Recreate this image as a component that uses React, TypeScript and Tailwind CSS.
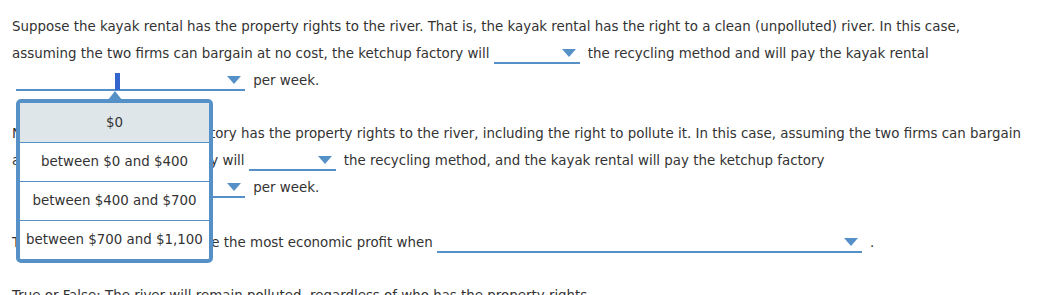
import type { ReactNode } from "react";

const options = ["$0", "between $0 and $400", "between $400 and $700", "between $700 and $1,100"];

const Arrow = () => (
  <svg className="absolute right-[4px] top-[4px]" width="14" height="8" viewBox="0 0 14 8">
    <path d="M0 0 L14 0 L7 8 Z" fill="#5591c7" />
  </svg>
);

const Dropdown = ({ width, children }: { width: string; children?: ReactNode }) => (
  <span className={`relative mx-[4px] inline-block h-[19px] align-[-6px] border-b-2 border-[#5591c7] ${width}`}>
    <Arrow />
    {children}
  </span>
);

const Menu = () => (
  <div className="absolute left-0 top-[27px] z-10 w-[197px]">
    <svg className="absolute left-[92px] -top-[8px]" width="14" height="9" viewBox="0 0 14 9">
      <path d="M0 9 L7 0 L14 9 Z" fill="#5591c7" />
    </svg>
    <ul className="rounded-[5px] border-4 border-[#5591c7] bg-white">
      {options.map((option, index) => (
        <li
          key={option}
          className={`flex h-[39px] items-center justify-center whitespace-nowrap text-[13.4px] leading-none text-[#333] ${
            index === 0 ? "bg-[#dfe6ea]" : "border-t border-[#5591c7]"
          }`}
        >
          {option}
        </li>
      ))}
    </ul>
  </div>
);

const Line = ({ children }: { children: ReactNode }) => <div className="h-[27px] whitespace-nowrap">{children}</div>;

export default function App() {
  return (
    <div className="h-[295px] overflow-hidden bg-white pl-[12px] pt-[13px] text-[13.4px] leading-[27px] text-[#333] [font-family:'DejaVu_Sans',Verdana,sans-serif]">
      <div>
        <Line>
          Suppose the kayak rental has the property rights to the river. That is, the kayak rental has the right to a
          clean (unpolluted) river. In this case,
        </Line>
        <Line>
          assuming the two firms can bargain at no cost, the ketchup factory will
          <Dropdown width="w-[86px]" /> the recycling method and will pay the kayak rental
        </Line>
        <Line>
          <Dropdown width="w-[229px]">
            <span className="absolute left-[99px] top-[1px] h-[17px] w-[5px] bg-[#3366cc]" />
            <Menu />
          </Dropdown>{" "}
          per week.
        </Line>
      </div>

      <div className="mt-[26px]">
        <Line>
          Now suppose the ketchup factory has the property rights to the river, including the right to pollute it. In
          this case, assuming the two firms can bargain
        </Line>
        <Line>
          at no cost, the ketchup factory will
          <Dropdown width="w-[87px]" /> the recycling method, and the kayak rental will pay the ketchup factory
        </Line>
        <Line>
          <Dropdown width="w-[229px]" /> per week.
        </Line>
      </div>

      <div className="mt-[28px]">
        <Line>
          The firms together will achieve the most economic profit when
          <Dropdown width="w-[425px]" /> .
        </Line>
      </div>

      <div className="mt-[26px]">
        <Line>True or False: The river will remain polluted, regardless of who has the property rights.</Line>
      </div>
    </div>
  );
}
